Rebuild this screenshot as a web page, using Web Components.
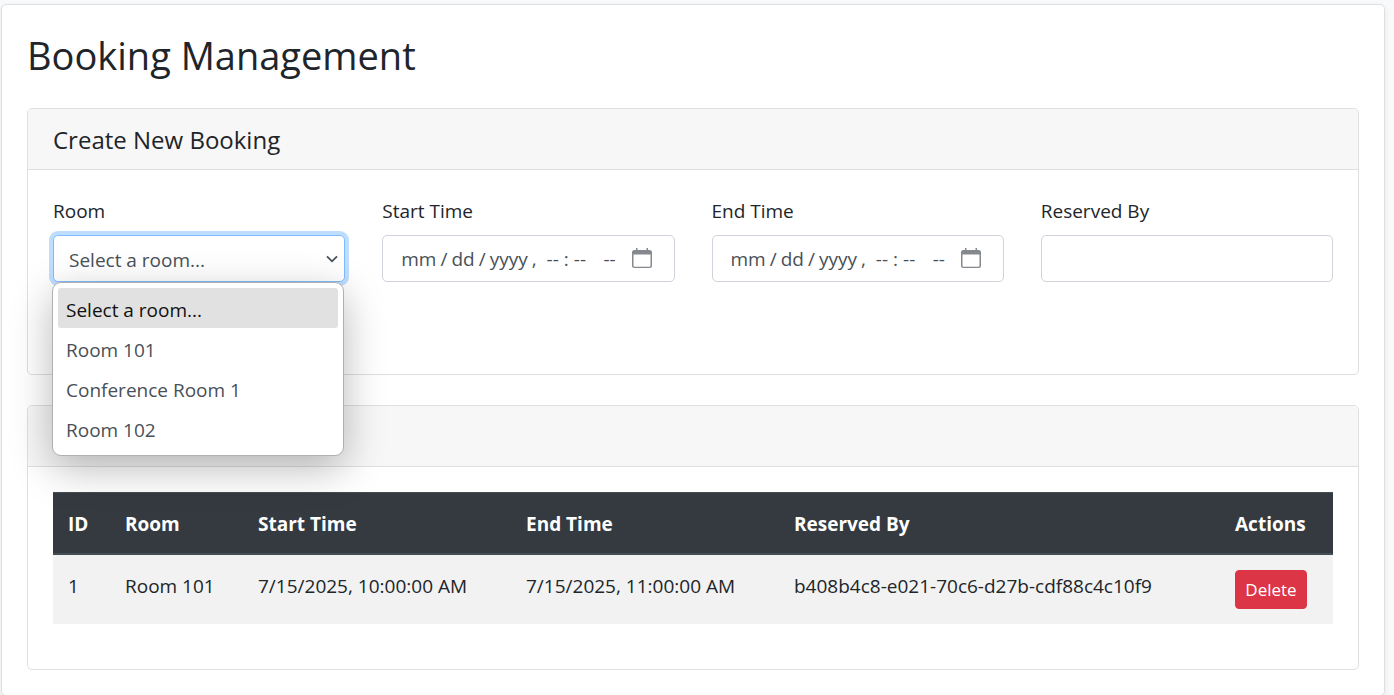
<!DOCTYPE html>
<html lang="en">
<head>
<meta charset="utf-8">
<title>Booking Management</title>
<style>
  body {
    margin: 0;
    background: #f8f9fa;
    color: #212529;
    font-family: "Open Sans", "Noto Sans", sans-serif;
    font-size: 19px;
    line-height: 32px;
  }
</style>
</head>
<body>
<booking-page></booking-page>

<template id="booking-page">
  <style>
    :host { display: block; padding: 4px 9px 0 1px; }
    main {
      background: #fff;
      border: 1px solid #dfdfdf;
      border-radius: 5px;
      box-shadow: 0 3px 6px rgba(0, 0, 0, .075);
      padding: 25px;
    }
    h1 { margin: 0 0 28px; font-size: 38px; font-weight: 400; line-height: 50px; }
    h2 { margin: 0; font-size: 24px; font-weight: 400; line-height: 32px; }
    panel-card + panel-card { margin-top: 30px; }
    form { display: grid; grid-template-columns: repeat(4, minmax(0, 1fr)); column-gap: 37px; row-gap: 20px; }
    .actions { grid-column: 1 / -1; min-height: 47px; }
  </style>
  <main>
    <h1>Booking Management</h1>
    <panel-card>
      <h2 slot="title">Create New Booking</h2>
      <form>
        <room-select label="Room"></room-select>
        <form-field label="Start Time" type="datetime-local"></form-field>
        <form-field label="End Time" type="datetime-local"></form-field>
        <form-field label="Reserved By" type="text"></form-field>
        <div class="actions"></div>
      </form>
    </panel-card>
    <panel-card>
      <booking-table></booking-table>
    </panel-card>
  </main>
</template>

<template id="panel-card">
  <style>
    :host { display: block; border: 1px solid #dfdfdf; border-radius: 5px; background: #fff; }
    header { min-height: 32px; padding: 15px 25px 13px; background: #f7f7f7; border-bottom: 1px solid #dfdfdf; border-radius: 4px 4px 0 0; }
    .body { padding: 25px; }
  </style>
  <header><slot name="title"></slot></header>
  <div class="body"><slot></slot></div>
</template>

<template id="form-field">
  <style>
    :host { display: block; }
    label { display: block; margin-bottom: 8px; }
    input {
      display: block;
      box-sizing: border-box;
      width: 100%;
      height: 47px;
      margin: 0;
      padding: 0 22px 0 17px;
      border: 1px solid #ced4da;
      border-radius: 5px;
      background: #fff;
      color: #495057;
      font: inherit;
    }
    input::-webkit-datetime-edit-text { padding: 0 3px; }
    input::-webkit-datetime-edit-hour-field,
    input::-webkit-datetime-edit-minute-field { padding: 0 2px; }
    input::-webkit-datetime-edit-ampm-field { padding: 0 0 0 7px; }
    input::-webkit-calendar-picker-indicator {
      width: 20px;
      height: 20px;
      margin: 0 0 2px;
      padding: 0;
      opacity: 1;
      background: url("data:image/svg+xml,%3Csvg xmlns='http://www.w3.org/2000/svg' viewBox='0 0 20 20'%3E%3Cpath fill='%2385898e' fill-rule='evenodd' d='M4 0h1.500v2h9V0H16v2h1.500A2.500 2.500 0 0 1 20 4.500v13a2.500 2.500 0 0 1-2.500 2.500h-15A2.500 2.500 0 0 1 0 17.500v-13A2.500 2.500 0 0 1 2.500 2H4zM1.500 6.500v11a1.200 1.200 0 0 0 1.200 1.200h14.600a1.200 1.200 0 0 0 1.200-1.200v-11z'/%3E%3C/svg%3E") center / 20px 20px no-repeat;
    }
  </style>
  <label for="control"></label>
  <input id="control">
</template>

<template id="room-select">
  <style>
    :host { display: block; position: relative; }
    label { display: block; margin-bottom: 8px; }
    select {
      appearance: none;
      display: block;
      box-sizing: border-box;
      width: 100%;
      height: 47px;
      margin: 0;
      padding: 2px 32px 0 15px;
      border: 1px solid #80bdff;
      border-radius: 5px;
      outline: none;
      box-shadow: 0 0 0 4px #bfdeff;
      background: #fff url("data:image/svg+xml,%3Csvg xmlns='http://www.w3.org/2000/svg' viewBox='0 0 12 8'%3E%3Cpath fill='none' stroke='%23495057' stroke-width='1.800' d='M1 1.300l5 5 5-5'/%3E%3C/svg%3E") right 6px center / 12px 8px no-repeat;
      color: #495057;
      font: inherit;
    }
    ul {
      position: absolute;
      z-index: 1;
      top: 100%;
      left: -1px;
      right: 1px;
      margin: 0;
      padding: 5px 5px 7px;
      list-style: none;
      border: 1px solid #b0b0b0;
      border-radius: 9px;
      background: #fff;
      color: #495057;
      box-shadow: 0 12px 40px rgba(0, 0, 0, .28);
    }
    li { padding: 6px 8px 2px; border-radius: 3px; }
    li[aria-selected="true"] { background: #e1e1e1; color: #101010; }
  </style>
  <label for="room"></label>
  <select id="room">
    <option>Select a room...</option>
    <option>Room 101</option>
    <option>Conference Room 1</option>
    <option>Room 102</option>
  </select>
  <ul role="listbox" aria-label="Room">
    <li role="option" aria-selected="true">Select a room...</li>
    <li role="option">Room 101</li>
    <li role="option">Conference Room 1</li>
    <li role="option">Room 102</li>
  </ul>
</template>

<template id="booking-table">
  <style>
    :host { display: block; margin-bottom: 20px; }
    table { width: 100%; table-layout: fixed; border-collapse: separate; border-spacing: 0; }
    th, td { padding: 15px 15px 13px; text-align: left; vertical-align: top; white-space: nowrap; }
    th { background: #343a40; color: #fff; font-weight: 700; border-top: 1px solid #454d55; border-bottom: 2px solid #454d55; }
    td { background: #f2f2f2; }
    td:last-child { padding-bottom: 15px; }
    .id { width: 27px; }
    .room { width: 103px; }
    .time { width: 238px; }
    .act { width: 83px; }
    button {
      display: block;
      width: 72px;
      height: 39px;
      padding: 0;
      border: 1px solid #dc3545;
      border-radius: 4px;
      background: #dc3545;
      color: #fff;
      font: inherit;
      font-size: 17px;
    }
  </style>
  <table>
    <thead>
      <tr>
        <th class="id">ID</th>
        <th class="room">Room</th>
        <th class="time">Start Time</th>
        <th class="time">End Time</th>
        <th>Reserved By</th>
        <th class="act">Actions</th>
      </tr>
    </thead>
    <tbody>
      <tr>
        <td>1</td>
        <td>Room 101</td>
        <td>7/15/2025, 10:00:00 AM</td>
        <td>7/15/2025, 11:00:00 AM</td>
        <td>b408b4c8-e021-70c6-d27b-cdf88c4c10f9</td>
        <td><button type="button">Delete</button></td>
      </tr>
    </tbody>
  </table>
</template>

<script>
  class TemplateElement extends HTMLElement {
    constructor() {
      super();
      const template = document.getElementById(this.localName);
      this.attachShadow({ mode: "open" }).append(template.content.cloneNode(true));
    }
  }

  class LabelledElement extends TemplateElement {
    connectedCallback() {
      this.shadowRoot.querySelector("label").textContent = this.getAttribute("label");
      const input = this.shadowRoot.querySelector("input");
      if (input) input.type = this.getAttribute("type");
    }
  }

  customElements.define("panel-card", class extends TemplateElement {});
  customElements.define("form-field", class extends LabelledElement {});
  customElements.define("room-select", class extends LabelledElement {});
  customElements.define("booking-table", class extends TemplateElement {});
  customElements.define("booking-page", class extends TemplateElement {});
</script>
</body>
</html>
